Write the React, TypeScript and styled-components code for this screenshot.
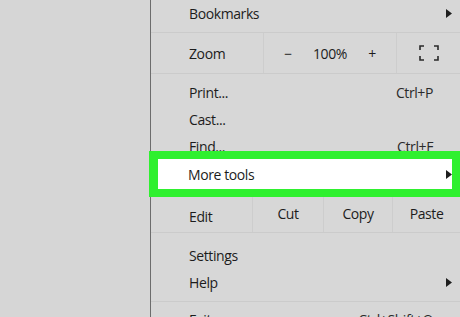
import React, { FunctionComponent } from "react";
import styled, { createGlobalStyle } from "styled-components";

const GlobalStyle = createGlobalStyle`
  html, body {
    margin: 0;
    padding: 0;
    background: #d6d6d6;
    overflow: hidden;
  }
  body {
    font-family: "Open Sans", "Noto Sans", "Liberation Sans", sans-serif;
  }
`;

const Arrow: FunctionComponent = () => (
  <ArrowIcon viewBox="0 0 6 9" width={6} height={9}>
    <path d="M0 0 L6 4.5 L0 9 Z" fill="#1e1e1e" />
  </ArrowIcon>
);

const FullscreenIcon: FunctionComponent = () => (
  <svg width={20} height={16} viewBox="0 0 20 16">
    <g fill="none" stroke="#2a2a2a" strokeWidth={1.6}>
      <path d="M1 5 V1 H5" />
      <path d="M15 1 H19 V5" />
      <path d="M1 11 V15 H5" />
      <path d="M15 15 H19 V11" />
    </g>
  </svg>
);

interface ItemProps {
  label: string;
  shortcut?: string;
  submenu?: boolean;
}

const Item: FunctionComponent<ItemProps> = ({ label, shortcut, submenu }) => (
  <Row>
    <Label>{label}</Label>
    {shortcut && <Shortcut>{shortcut}</Shortcut>}
    {submenu && <Arrow />}
  </Row>
);

export default function App() {
  return (
    <>
      <GlobalStyle />
      <Page>
        <Backdrop />
        <Menu>
          <Section $pb={5}>
            <Item label="Bookmarks" submenu />
          </Section>
          <Split>
            <SplitLabel>Zoom</SplitLabel>
            <ZoomCell $w={48}>−</ZoomCell>
            <ZoomCell $w={36}>100%</ZoomCell>
            <ZoomCell $w={48}>+</ZoomCell>
            <ZoomCell $w={65} $divided>
              <FullscreenIcon />
            </ZoomCell>
          </Split>
          <Section $pt={5} $open>
            <Item label="Print..." shortcut="Ctrl+P" />
            <Item label="Cast..." />
            <Item label="Find..." shortcut="Ctrl+F" />
            <Highlight>
              <HighlightRow>
                <Label>More tools</Label>
                <Arrow />
              </HighlightRow>
            </Highlight>
          </Section>
          <EditRow>
            <EditLabel>Edit</EditLabel>
            <EditCell $w={71}>Cut</EditCell>
            <EditCell $w={69}>Copy</EditCell>
            <EditCell $w={68}>Paste</EditCell>
          </EditRow>
          <Section $pt={9} $pb={5}>
            <Item label="Settings" />
            <Item label="Help" submenu />
          </Section>
          <Section $pt={4} $open>
            <Item label="Exit" shortcut="Ctrl+Shift+Q" />
          </Section>
        </Menu>
      </Page>
    </>
  );
}

const Page = styled.div`
  display: flex;
  width: 460px;
  height: 317px;
  overflow: hidden;
`;

const Backdrop = styled.div`
  width: 150px;
  flex-shrink: 0;
  background: #d6d6d6;
  border-right: 1px solid #6c6c6c;
`;

const Menu = styled.div`
  flex: 1;
  background: #d7d7d7;
  color: #1c1c1c;
  font-size: 14px;
  letter-spacing: -0.4px;
`;

const Section = styled.div<{ $pt?: number; $pb?: number; $open?: boolean }>`
  padding-top: ${(p) => p.$pt || 0}px;
  padding-bottom: ${(p) => p.$pb || 0}px;
  border-bottom: ${(p) => (p.$open ? "none" : "1px solid #cbcbcb")};
`;

const Row = styled.div`
  height: 27px;
  display: flex;
  align-items: center;
  padding: 0 9px 0 38px;
`;

const Label = styled.span`
  flex: 1;
  white-space: nowrap;
`;

const Shortcut = styled.span`
  margin-right: 19px;
  color: #2a2a2a;
`;

const ArrowIcon = styled.svg`
  display: block;
  flex-shrink: 0;
`;

const Split = styled.div`
  height: 40px;
  display: flex;
  align-items: center;
  border-bottom: 1px solid #cbcbcb;
`;

const SplitLabel = styled.span`
  width: 74px;
  padding-left: 38px;
  height: 100%;
  display: flex;
  align-items: center;
  border-right: 1px solid #cdcdcd;
`;

const ZoomCell = styled.div<{ $w: number; $divided?: boolean }>`
  width: ${(p) => p.$w}px;
  height: 100%;
  display: flex;
  align-items: center;
  justify-content: center;
  border-left: ${(p) => (p.$divided ? "1px solid #cdcdcd" : "none")};
  box-sizing: border-box;
`;

const Highlight = styled.div`
  position: relative;
  z-index: 1;
  margin: -9px 0 0 -2px;
  border: solid #2ff02f;
  border-width: 8px 9px 8px 9px;
  background: #ffffff;
`;

const HighlightRow = styled.div`
  height: 30px;
  display: flex;
  align-items: center;
  padding: 0 0 0 30px;
`;

const EditRow = styled.div`
  height: 35px;
  display: flex;
  align-items: center;
  border-bottom: 1px solid #cbcbcb;
`;

const EditLabel = styled.span`
  width: 63px;
  padding-left: 38px;
  padding-top: 4px;
`;

const EditCell = styled.div<{ $w: number }>`
  width: ${(p) => p.$w}px;
  height: 100%;
  display: flex;
  justify-content: center;
  padding-top: 7px;
  box-sizing: border-box;
  border-left: 1px solid #cdcdcd;
`;
